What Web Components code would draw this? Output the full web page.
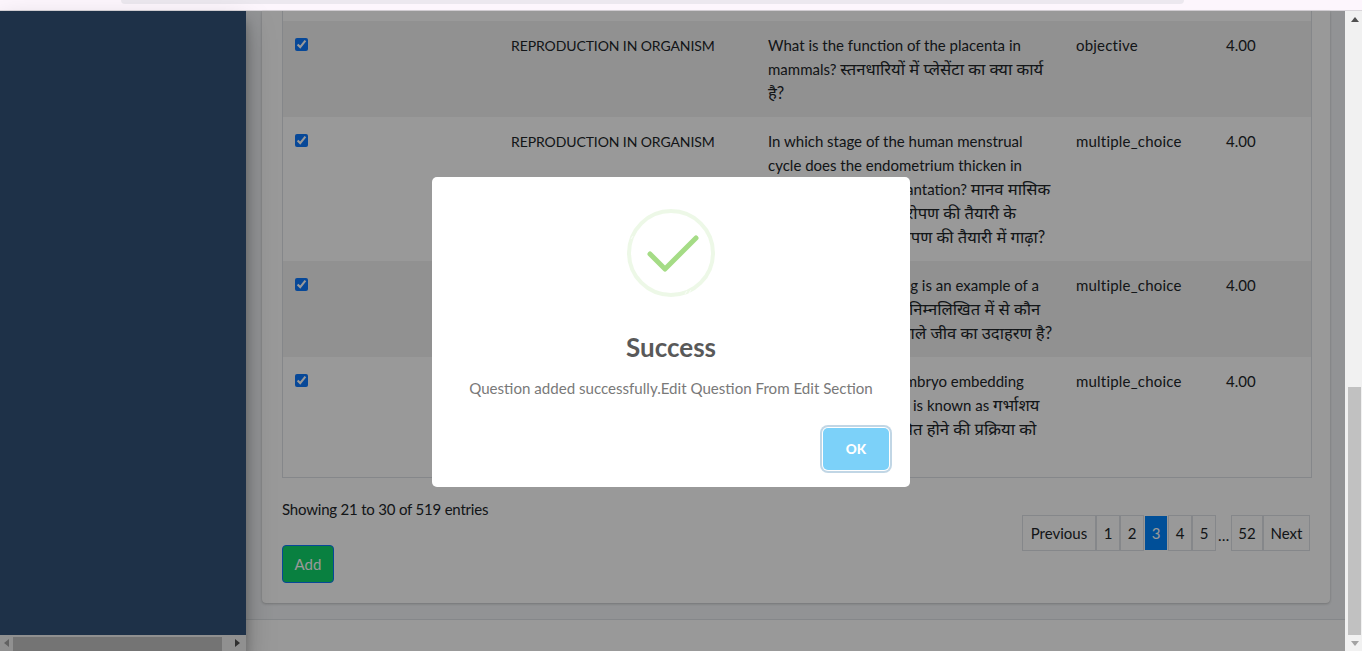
<!DOCTYPE html>
<html lang="en">
<head>
<meta charset="utf-8">
<title>Questions</title>
<style>
    html, body { margin: 0; height: 100%; overflow: hidden; }
    body {
        --font: Lato, "Noto Sans Devanagari", "Lohit Devanagari", "Noto Sans", sans-serif;
        font: 15px/24px var(--font);
        color: #212529;
    }
</style>
</head>
<body>
<app-shell>
    <side-bar slot="side"></side-bar>
    <q-card>
        <q-table>
            <q-row class="cut"></q-row>
            <q-row striped>
                <span slot="topic">REPRODUCTION IN ORGANISM</span>
                <span slot="question">What is the function of the placenta in<br>mammals? <hi-text>स्तनधारियों में प्लेसेंटा का क्या कार्य</hi-text><br><hi-text>है?</hi-text></span>
                <span slot="type">objective</span>
                <span slot="marks">4.00</span>
            </q-row>
            <q-row>
                <span slot="topic">REPRODUCTION IN ORGANISM</span>
                <span slot="question">In which stage of the human menstrual<br>cycle does the endometrium thicken in<br>&nbsp;&nbsp;preparation for implantation? <hi-text>मानव मासिक</hi-text><br><hi-text>धर्म के किस चरण में आरोपण की तैयारी के</hi-text><br><hi-text>&nbsp;&nbsp;&nbsp;&nbsp;लिए एंडोमेट्रियम आरोपण की तैयारी में गाढ़ा?</hi-text></span>
                <span slot="type">multiple_choice</span>
                <span slot="marks">4.00</span>
            </q-row>
            <q-row striped>
                <span slot="topic">REPRODUCTION IN ORGANISM</span>
                <span slot="question">Which of the following is an example of a<br>viviparous organism? <hi-text>निम्नलिखित में से कौन</hi-text><br><hi-text>&nbsp;&nbsp;&nbsp;&nbsp;सा जीवित बच्चे देने वाले जीव का उदाहरण है?</hi-text></span>
                <span slot="type">multiple_choice</span>
                <span slot="marks">4.00</span>
            </q-row>
            <q-row>
                <span slot="topic">REPRODUCTION IN ORGANISM</span>
                <span slot="question">&nbsp;The process of the embryo embedding<br>into the uterine lining is known as <hi-text>गर्भाशय</hi-text><br><hi-text>की परत में भ्रूण के स्थापित होने की प्रक्रिया को</hi-text><br><hi-text>क्या कहते हैं?</hi-text></span>
                <span slot="type">multiple_choice</span>
                <span slot="marks">4.00</span>
            </q-row>
        </q-table>
        <table-foot>
            <span slot="info">Showing 21 to 30 of 519 entries</span>
            <span slot="action">Add</span>
            <page-btn slot="pages" style="--w:74px">Previous</page-btn>
            <page-btn slot="pages" style="--w:24px">1</page-btn>
            <page-btn slot="pages" style="--w:24px">2</page-btn>
            <page-btn slot="pages" style="--w:24px" active>3</page-btn>
            <page-btn slot="pages" style="--w:24px">4</page-btn>
            <page-btn slot="pages" style="--w:24px">5</page-btn>
            <page-btn slot="pages" style="--w:15px" gap>…</page-btn>
            <page-btn slot="pages" style="--w:32px">52</page-btn>
            <page-btn slot="pages" style="--w:47px">Next</page-btn>
        </table-foot>
    </q-card>
</app-shell>
<swal-modal heading="Success" ok="OK">Question added successfully.Edit Question From Edit Section</swal-modal>

<script>
(function () {
    class AppShell extends HTMLElement {
        constructor() {
            super();
            this.attachShadow({ mode: 'open' }).innerHTML = `
            <style>
                :host { display: flex; flex-direction: column; height: 651px; }
                .chrome { flex: none; height: 10px; background: #fdf6fd; border-bottom: 1px solid #d9d5da; display: flex; padding: 0 178px 0 121px; }
                .chrome i { flex: 1; height: 4px; background: #ece8ef; border-radius: 0 0 10px 10px; }
                .main { flex: 1; display: flex; min-height: 0; }
                .content { flex: 1; min-width: 0; background: #f4f6f9; display: flex; flex-direction: column; padding: 0 15px 0 16px; }
                footer { flex: 1; margin: 16px -15px 0 -16px; background: #fff; border-top: 1px solid #dee2e6; }
                .vbar { flex: none; width: 17px; background: #f1f1f1; display: flex; flex-direction: column; align-items: center; justify-content: space-between; box-sizing: border-box; padding-left: 2px; }
                .vbar .thumb { width: 13px; height: 248px; background: #c1c1c1; margin-top: auto; }
                .arrow { flex: none; height: 16px; display: flex; align-items: center; justify-content: center; }
            </style>
            <div class="chrome"><i></i></div>
            <div class="main">
                <slot name="side"></slot>
                <div class="content"><slot></slot><footer></footer></div>
                <div class="vbar">
                    <div class="arrow"><svg width="8" height="5" viewBox="0 0 8 5"><path d="M0 5 4 0l4 5z" fill="#505050"/></svg></div>
                    <div class="thumb"></div>
                    <div class="arrow"><svg width="8" height="5" viewBox="0 0 8 5"><path d="M0 0h8L4 5z" fill="#a3a3a3"/></svg></div>
                </div>
            </div>`;
        }
    }

    class SideBar extends HTMLElement {
        constructor() {
            super();
            this.attachShadow({ mode: 'open' }).innerHTML = `
            <style>
                :host { display: flex; flex-direction: column; flex: none; width: 246px; height: 100%; background: #325278; position: relative; z-index: 1; box-shadow: 0 14px 28px rgba(0,0,0,.25), 0 10px 10px rgba(0,0,0,.22); }
                .fill { flex: 1; }
                .hbar { flex: none; height: 16px; background: #f1f1f1; display: flex; align-items: center; justify-content: space-between; padding: 0 6px 0 4px; box-sizing: border-box; position: relative; }
                .thumb { position: absolute; left: 13px; width: 209px; top: 2px; bottom: 0; background: #c1c1c1; }
            </style>
            <div class="fill"></div>
            <div class="hbar">
                <svg width="5" height="8" viewBox="0 0 5 8"><path d="M5 0v8L0 4z" fill="#a3a3a3"/></svg>
                <div class="thumb"></div>
                <svg width="5" height="8" viewBox="0 0 5 8"><path d="M0 0v8l5-4z" fill="#505050"/></svg>
            </div>`;
        }
    }

    class QCard extends HTMLElement {
        constructor() {
            super();
            this.attachShadow({ mode: 'open' }).innerHTML = `
            <style>
                :host { display: block; flex: none; background: #fff; padding: 0 18px 20px 20px; border-radius: 0 0 4px 4px; box-shadow: 0 0 1px rgba(0,0,0,.125), 0 1px 3px rgba(0,0,0,.2); }
            </style>
            <slot></slot>`;
        }
    }

    class QTable extends HTMLElement {
        constructor() {
            super();
            this.attachShadow({ mode: 'open' }).innerHTML = `
            <style>
                :host { display: block; border: 1px solid #dee2e6; border-top: 0; }
            </style>
            <slot></slot>`;
        }
    }

    class QRow extends HTMLElement {
        connectedCallback() {
            if (this.shadowRoot) return;
            const cut = this.classList.contains('cut');
            this.attachShadow({ mode: 'open' }).innerHTML = `
            <style>
                :host { display: grid; grid-template-columns: 216px 257px 308px 150px 1fr; }
                :host([striped]) { background: rgba(0,0,0,.05); }
                :host(.cut) { height: 10px; }
                .cell { padding: 12px; white-space: nowrap; }
                input { display: block; width: 13px; height: 13px; margin: 5px 0 0; accent-color: #0d78fd; }
                ::slotted([slot=topic]) { font-size: 14px; letter-spacing: -.1px; }
                ::slotted([slot=type]) { letter-spacing: .2px; }
            </style>
            ${cut ? '' : `
            <div class="cell"><input type="checkbox" checked></div>
            <div class="cell"><slot name="topic"></slot></div>
            <div class="cell"><slot name="question"></slot></div>
            <div class="cell"><slot name="type"></slot></div>
            <div class="cell"><slot name="marks"></slot></div>`}`;
        }
    }

    class HiText extends HTMLElement {
        constructor() {
            super();
            this.attachShadow({ mode: 'open' }).innerHTML = `
            <style>
                :host { font-size: 16.6px; line-height: 1; }
            </style>
            <slot></slot>`;
        }
    }

    class TableFoot extends HTMLElement {
        constructor() {
            super();
            this.attachShadow({ mode: 'open' }).innerHTML = `
            <style>
                :host { display: flex; justify-content: space-between; align-items: flex-start; margin-right: 2px; }
                .left { padding-top: 19px; }
                ::slotted([slot=info]) { letter-spacing: -.2px; }
                .add { display: block; box-sizing: border-box; width: 52px; height: 38px; margin-top: 24px; background: #10d56c; border: 1px solid #0d78fd; border-radius: 4px; color: #fff; text-align: center; line-height: 36px; }
                .pages { display: flex; margin-top: 37px; }
            </style>
            <div class="left">
                <slot name="info"></slot>
                <div class="add"><slot name="action"></slot></div>
            </div>
            <div class="pages"><slot name="pages"></slot></div>`;
        }
    }

    class PageBtn extends HTMLElement {
        constructor() {
            super();
            this.attachShadow({ mode: 'open' }).innerHTML = `
            <style>
                :host { display: block; box-sizing: border-box; width: var(--w); height: 36px; line-height: 34px; text-align: center; border: 1px solid #dee2e6; color: #212529; white-space: nowrap; }
                :host([active]) { background: #0084fd padding-box; border-color: transparent; color: #fff; }
                :host([gap]) { border-color: transparent; line-height: 38px; }
            </style>
            <slot></slot>`;
        }
    }

    class SwalModal extends HTMLElement {
        constructor() {
            super();
            this.attachShadow({ mode: 'open' }).innerHTML = `
            <style>
                :host { position: absolute; z-index: 5; left: 0; right: 17px; top: 11px; bottom: 0; display: flex; align-items: center; justify-content: center; padding: 2px 3px 0 0; background: rgba(0,0,0,.4); }
                .box { box-sizing: border-box; width: 478px; height: 310px; background: #fff; border-radius: 5px; display: flex; flex-direction: column; align-items: center; padding-top: 32px; }
                svg { display: block; flex: none; }
                h2 { margin: 33px 0 0; font-size: 26px; line-height: 34px; font-weight: 700; color: #595959; }
                p { margin: 12px 0 0; line-height: 24px; font-size: 15.1px; color: #797979; white-space: nowrap; }
                .acts { align-self: stretch; display: flex; justify-content: flex-end; padding: 28px 21px 0 0; }
                button { box-sizing: border-box; width: 66px; height: 42px; padding: 0; border: 0; border-radius: 5px; background: #7cd1f9; color: #fff; font: 900 13.5px var(--font); box-shadow: 0 0 0 1px #fff, 0 0 0 3px rgba(43,114,165,.29); }
            </style>
            <div class="box">
                <svg width="88" height="88" viewBox="0 0 88 88" fill="none">
                    <circle cx="44" cy="44" r="42" stroke="#a5dc86" stroke-opacity=".2" stroke-width="4"/>
                    <path d="M4 30l2-3M58 85l2-3M62 84l2-3" stroke="#fff" stroke-opacity=".7"/>
                    <path d="M23 45 38 60 69 29" stroke="#a5dc86" stroke-width="5" stroke-linecap="round" stroke-linejoin="round"/>
                </svg>
                <h2></h2>
                <p><slot></slot></p>
                <div class="acts"><button type="button"></button></div>
            </div>`;
        }

        connectedCallback() {
            this.shadowRoot.querySelector('h2').textContent = this.getAttribute('heading');
            this.shadowRoot.querySelector('button').textContent = this.getAttribute('ok');
        }
    }

    customElements.define('app-shell', AppShell);
    customElements.define('side-bar', SideBar);
    customElements.define('q-card', QCard);
    customElements.define('q-table', QTable);
    customElements.define('q-row', QRow);
    customElements.define('hi-text', HiText);
    customElements.define('table-foot', TableFoot);
    customElements.define('page-btn', PageBtn);
    customElements.define('swal-modal', SwalModal);
})();
</script>
</body>
</html>
